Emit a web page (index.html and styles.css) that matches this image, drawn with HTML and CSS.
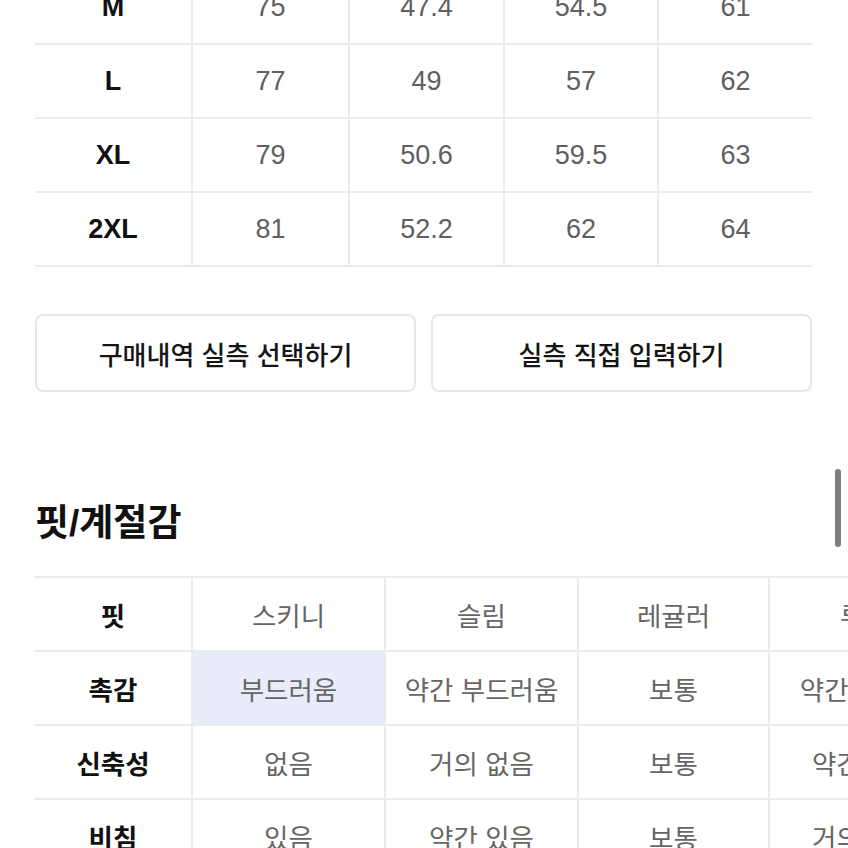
FILE: index.html
```html
<!DOCTYPE html>
<html lang="ko">
<head>
<meta charset="utf-8">
<title>실측 사이즈</title>
<link rel="stylesheet" href="styles.css">
</head>
<body>
<div class="page">
  <div class="size-wrap">
    <table class="size-table">
      <colgroup>
        <col class="c1"><col class="c2"><col class="c3"><col class="c4"><col class="c5">
      </colgroup>
      <tbody>
        <tr><th>M</th><td>75</td><td>47.4</td><td>54.5</td><td>61</td></tr>
        <tr><th>L</th><td>77</td><td>49</td><td>57</td><td>62</td></tr>
        <tr><th>XL</th><td>79</td><td>50.6</td><td>59.5</td><td>63</td></tr>
        <tr><th>2XL</th><td>81</td><td>52.2</td><td>62</td><td>64</td></tr>
      </tbody>
    </table>
  </div>

  <div class="btn-row">
    <button class="btn" type="button">구매내역 실측 선택하기</button>
    <button class="btn" type="button">실측 직접 입력하기</button>
  </div>

  <h2 class="section-title">핏/계절감</h2>

  <div class="fit-wrap">
    <table class="fit-table">
      <colgroup>
        <col class="f1"><col class="f2"><col class="f2"><col class="f3"><col class="f3"><col class="f3">
      </colgroup>
      <tbody>
        <tr><th>핏</th><td>스키니</td><td>슬림</td><td>레귤러</td><td>루즈</td><td>오버사이즈</td></tr>
        <tr><th>촉감</th><td class="on">부드러움</td><td>약간 부드러움</td><td>보통</td><td>약간 뻣뻣함</td><td>뻣뻣함</td></tr>
        <tr><th>신축성</th><td>없음</td><td>거의 없음</td><td>보통</td><td>약간 있음</td><td>좋음</td></tr>
        <tr><th>비침</th><td>있음</td><td>약간 있음</td><td>보통</td><td>거의 없음</td><td>없음</td></tr>
      </tbody>
    </table>
  </div>
</div>
<div class="scrollbar"></div>
</body>
</html>
```

FILE: styles.css
```css
html, body {
  margin: 0;
  padding: 0;
  background: #ffffff;
  overflow: hidden;
}

body {
  font-family: "Liberation Sans", "Noto Sans CJK KR", sans-serif;
  color: #111111;
}

.page {
  padding: 0 36px 0 35px;
}

.size-wrap {
  margin-top: -29px;
}

.size-table,
.fit-table {
  border-collapse: collapse;
  table-layout: fixed;
}

.size-table {
  width: 777px;
  font-size: 27px;
}

.size-table .c1 { width: 157px; }
.size-table .c2 { width: 157px; }
.size-table .c3 { width: 155px; }
.size-table .c4 { width: 154px; }
.size-table .c5 { width: 154px; }

.size-table th,
.size-table td {
  height: 72px;
  padding: 0;
  text-align: center;
  vertical-align: middle;
  border-bottom: 2px solid #ebebeb;
}

.size-table th {
  font-weight: 700;
  color: #111111;
}

.size-table td {
  font-weight: 400;
  color: #606060;
  border-left: 2px solid #ebebeb;
}

.btn-row {
  display: flex;
  gap: 15px;
  margin-top: 47px;
  width: 777px;
}

.btn {
  flex: 1;
  height: 78px;
  background: #ffffff;
  border: 2px solid #e6e6e6;
  border-radius: 8px;
  font-family: "Liberation Sans", "Noto Sans CJK KR", sans-serif;
  font-size: 26px;
  font-weight: 500;
  color: #151515;
  padding: 0;
}

.section-title {
  margin: 110px 0 0;
  font-size: 37px;
  line-height: 44px;
  font-weight: 700;
  color: #111111;
}

.fit-wrap {
  margin-top: 30px;
  width: 1200px;
}

.fit-table {
  width: 1116px;
  font-size: 26.5px;
}

.fit-table .f1 { width: 157px; }
.fit-table .f2 { width: 193px; }
.fit-table .f3 { width: 191px; }

.fit-table tr:first-child th,
.fit-table tr:first-child td {
  border-top: 2px solid #ebebeb;
}

.fit-table th,
.fit-table td {
  height: 72px;
  padding: 0;
  text-align: center;
  vertical-align: middle;
  border-bottom: 2px solid #ebebeb;
  white-space: nowrap;
}

.fit-table th {
  font-weight: 700;
  color: #111111;
}

.fit-table td {
  font-weight: 400;
  color: #666666;
  border-left: 2px solid #ebebeb;
}

.fit-table td.on {
  background: #e9ecfb;
}

.scrollbar {
  position: fixed;
  left: 835px;
  top: 469px;
  width: 6px;
  height: 78px;
  border-radius: 3px;
  background: #7d7d7d;
}
```
